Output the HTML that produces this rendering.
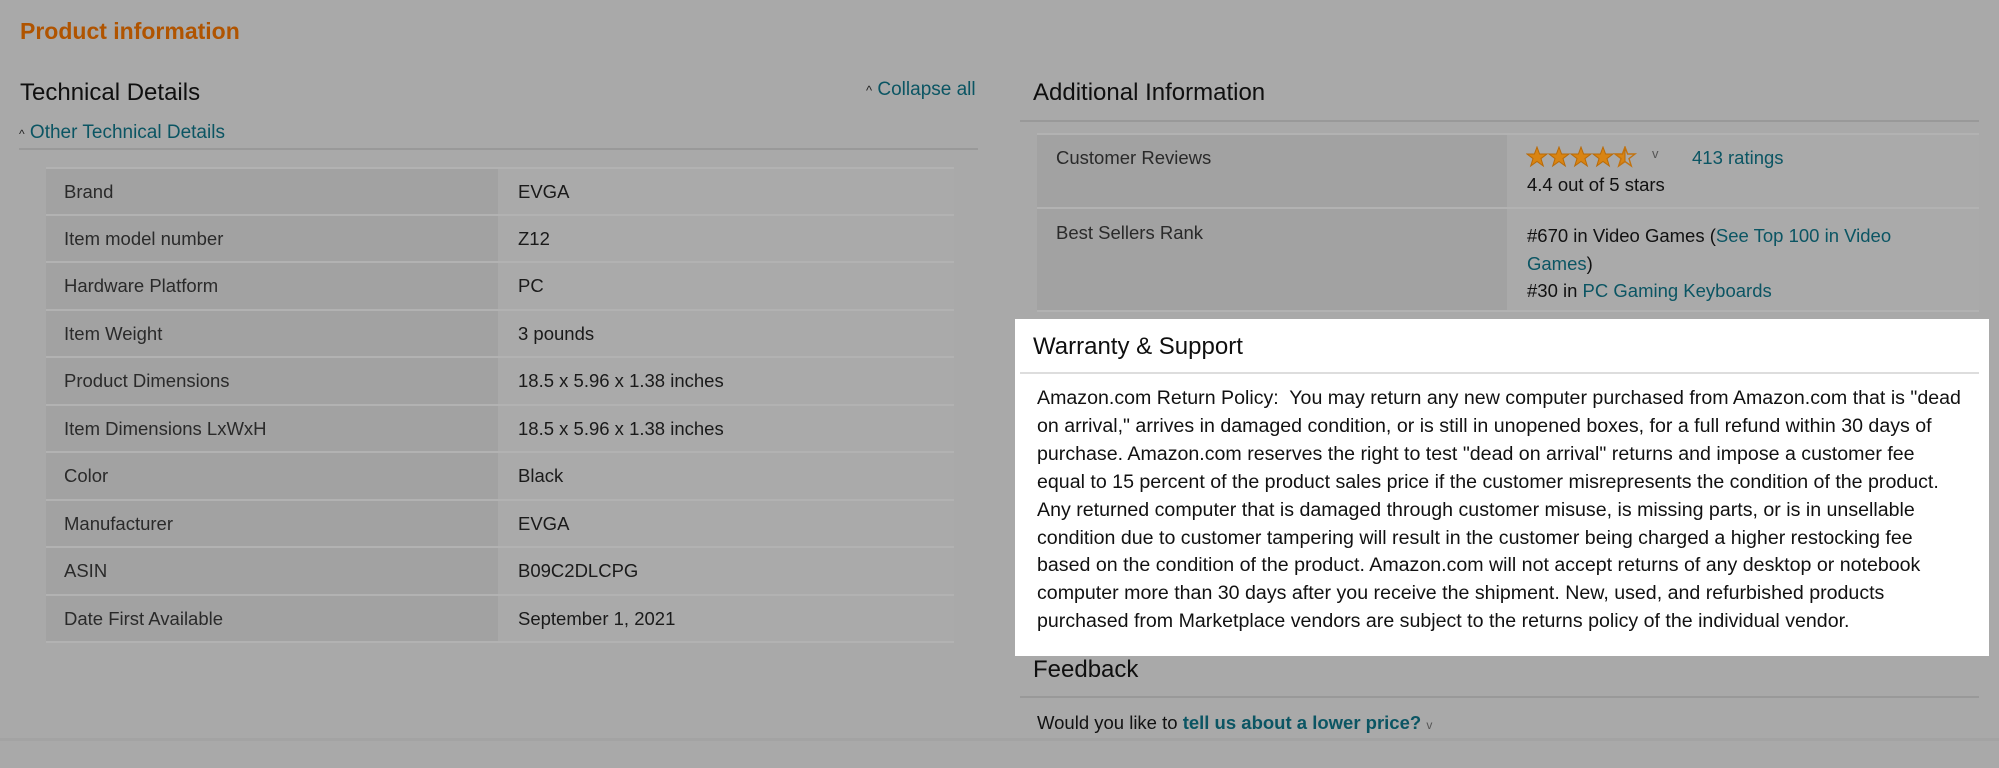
<!DOCTYPE html>
<html><head><meta charset="utf-8"><style>
*{margin:0;padding:0;box-sizing:border-box}
body{width:1999px;height:768px;background:#a9a9a9;font-family:"Liberation Sans",Arial,sans-serif;color:#111;position:relative;overflow:hidden}
.a{position:absolute;white-space:nowrap}
.h{font-size:24px;color:#0f0f0f}
.lk{color:#0b5563}
table{position:absolute;border-collapse:collapse;font-size:18.5px}
td{border-top:2px solid #b2b2b2;vertical-align:middle;color:#1a1a1a}
td.l{background:#a2a2a2;color:#2a2a2a}
td.r{background:#aaaaaa}
</style></head><body>
<div class="a" style="left:20px;top:18px;font-size:23px;font-weight:bold;color:#b05400">Product information</div>
<div class="a h" style="left:20px;top:79px">Technical Details</div>
<div class="a" style="left:866px;top:79px;font-size:19px"><span style="font-size:13px;color:#222">^</span> <span class="lk">Collapse all</span></div>
<div class="a" style="left:19px;top:122px;font-size:19px"><span style="font-size:12px;color:#222">^</span> <span class="lk">Other Technical Details</span></div>
<div class="a" style="left:19px;top:148px;width:959px;height:2px;background:#999"></div>
<table style="left:46px;top:167px;width:908px">
<tr style="height:47px"><td class="l" style="width:452px;padding-left:18px">Brand</td><td class="r" style="padding-left:20px">EVGA</td></tr>
<tr style="height:47px"><td class="l" style="padding-left:18px">Item model number</td><td class="r" style="padding-left:20px">Z12</td></tr>
<tr style="height:48px"><td class="l" style="padding-left:18px">Hardware Platform</td><td class="r" style="padding-left:20px">PC</td></tr>
<tr style="height:47px"><td class="l" style="padding-left:18px">Item Weight</td><td class="r" style="padding-left:20px">3 pounds</td></tr>
<tr style="height:48px"><td class="l" style="padding-left:18px">Product Dimensions</td><td class="r" style="padding-left:20px">18.5 x 5.96 x 1.38 inches</td></tr>
<tr style="height:47px"><td class="l" style="padding-left:18px">Item Dimensions LxWxH</td><td class="r" style="padding-left:20px">18.5 x 5.96 x 1.38 inches</td></tr>
<tr style="height:48px"><td class="l" style="padding-left:18px">Color</td><td class="r" style="padding-left:20px">Black</td></tr>
<tr style="height:47px"><td class="l" style="padding-left:18px">Manufacturer</td><td class="r" style="padding-left:20px">EVGA</td></tr>
<tr style="height:48px"><td class="l" style="padding-left:18px">ASIN</td><td class="r" style="padding-left:20px">B09C2DLCPG</td></tr>
<tr style="height:47px;border-bottom:2px solid #b2b2b2"><td class="l" style="padding-left:18px">Date First Available</td><td class="r" style="padding-left:20px">September 1, 2021</td></tr>
</table>

<div class="a h" style="left:1033px;top:79px">Additional Information</div>
<div class="a" style="left:1020px;top:120px;width:959px;height:2px;background:#999"></div>
<div class="a" style="left:1037px;top:133px;width:470px;height:179px;background:#a2a2a2"></div>
<div class="a" style="left:1507px;top:133px;width:472px;height:179px;background:#aaaaaa"></div>
<div class="a" style="left:1037px;top:133px;width:942px;height:2px;background:#b2b2b2"></div>
<div class="a" style="left:1037px;top:207px;width:942px;height:2px;background:#b2b2b2"></div>
<div class="a" style="left:1037px;top:310px;width:942px;height:2px;background:#b2b2b2"></div>
<div class="a" style="left:1056px;top:147px;font-size:18.5px;color:#2a2a2a">Customer Reviews</div>
<div class="a" style="left:1056px;top:222px;font-size:18.5px;color:#2a2a2a">Best Sellers Rank</div>
<svg class="a" style="left:1526px;top:146px" width="115" height="22" viewBox="0 0 115 22">
<g fill="#d98412" stroke="#b86a08" stroke-width="1">
<polygon points="11,1 13.6,8 21,8 15,12.6 17.3,20 11,15.5 4.7,20 7,12.6 1,8 8.4,8"/>
<polygon transform="translate(22,0)" points="11,1 13.6,8 21,8 15,12.6 17.3,20 11,15.5 4.7,20 7,12.6 1,8 8.4,8"/>
<polygon transform="translate(44,0)" points="11,1 13.6,8 21,8 15,12.6 17.3,20 11,15.5 4.7,20 7,12.6 1,8 8.4,8"/>
<polygon transform="translate(66,0)" points="11,1 13.6,8 21,8 15,12.6 17.3,20 11,15.5 4.7,20 7,12.6 1,8 8.4,8"/>
<polygon transform="translate(88,0)" points="11,1 11,15.5 4.7,20 7,12.6 1,8 8.4,8"/>
<polygon transform="translate(88,0)" fill="none" stroke="#c27310" stroke-width="1.4" points="11,1 13.6,8 21,8 15,12.6 17.3,20 11,15.5 4.7,20 7,12.6 1,8 8.4,8"/>
</g>
</svg>
<div class="a" style="left:1652px;top:146px;font-size:13px;color:#555">v</div>
<div class="a lk" style="left:1692px;top:147px;font-size:18.5px">413 ratings</div>
<div class="a" style="left:1527px;top:174px;font-size:18.5px">4.4 out of 5 stars</div>
<div class="a" style="left:1527px;top:222px;font-size:18.5px;line-height:27.5px">#670 in Video Games (<span class="lk">See Top 100 in Video</span><br><span class="lk">Games</span>)<br>#30 in <span class="lk">PC Gaming Keyboards</span></div>

<div class="a" style="left:1015px;top:319px;width:974px;height:337px;background:#fff"></div>
<div class="a h" style="left:1033px;top:333px">Warranty &amp; Support</div>
<div class="a" style="left:1020px;top:372px;width:959px;height:2px;background:#ddd"></div>
<div class="a" style="left:1037px;top:385px;font-size:19.6px;line-height:27.9px;color:#111">Amazon.com Return Policy:&nbsp; You may return any new computer purchased from Amazon.com that is "dead<br>on arrival," arrives in damaged condition, or is still in unopened boxes, for a full refund within 30 days of<br>purchase. Amazon.com reserves the right to test "dead on arrival" returns and impose a customer fee<br>equal to 15 percent of the product sales price if the customer misrepresents the condition of the product.<br>Any returned computer that is damaged through customer misuse, is missing parts, or is in unsellable<br>condition due to customer tampering will result in the customer being charged a higher restocking fee<br>based on the condition of the product. Amazon.com will not accept returns of any desktop or notebook<br>computer more than 30 days after you receive the shipment. New, used, and refurbished products<br>purchased from Marketplace vendors are subject to the returns policy of the individual vendor.</div>

<div class="a h" style="left:1033px;top:656px">Feedback</div>
<div class="a" style="left:1020px;top:696px;width:959px;height:2px;background:#999"></div>
<div class="a" style="left:1037px;top:712px;font-size:18.5px">Would you like to <b class="lk">tell us about a lower price?</b> <span style="font-size:12px;color:#555">v</span></div>
<div class="a" style="left:0;top:738px;width:1999px;height:3px;background:#a3a3a3"></div>
</body></html>
